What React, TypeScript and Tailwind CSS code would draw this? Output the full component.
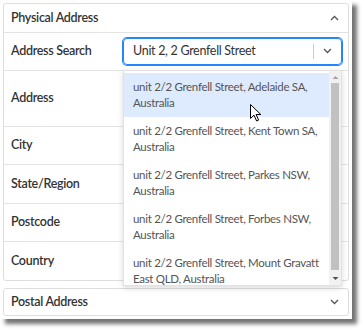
import React from "react";

const font = { fontFamily: 'Lato, "Noto Sans", sans-serif' };

const options = [
	"unit 2/2 Grenfell Street, Adelaide SA, Australia",
	"unit 2/2 Grenfell Street, Kent Town SA, Australia",
	"unit 2/2 Grenfell Street, Parkes NSW, Australia",
	"unit 2/2 Grenfell Street, Forbes NSW, Australia",
	"unit 2/2 Grenfell Street, Mount Gravatt East QLD, Australia",
];

const rows = [
	{ label: "Address", h: "h-[56px]" },
	{ label: "City", h: "h-[38px]" },
	{ label: "State/Region", h: "h-[39px]" },
	{ label: "Postcode", h: "h-[38px]" },
	{ label: "Country", h: "h-[38px]" },
];

const Chevron = ({ up, className }: { up?: boolean; className?: string }) => (
	<svg className={className} width="9" height="6" viewBox="0 0 9 6" fill="none">
		<path
			d={up ? "M1 5L4.5 1.5L8 5" : "M1 1L4.5 4.5L8 1"}
			stroke="currentColor"
			strokeWidth="1.3"
		/>
	</svg>
);

export default function App() {
	return (
		<div className="w-[364px] h-[332px] bg-white text-[12.5px] tracking-[-0.3px] text-[#333]" style={font}>
			<div className="relative w-[352px] h-[319px] bg-white p-[3px] shadow-[5px_5px_4px_rgba(0,0,0,0.55)]">
				<div className="border border-[#dedede] rounded-[3px] flex flex-col">
					<div className="h-[29px] flex items-center justify-between pl-[7px] pr-[9px] border-b border-[#e3e3e3] font-semibold">
						<span>Physical Address</span>
						<Chevron up className="text-[#555]" />
					</div>
					<div className="h-[38px] flex items-center border-b border-[#e3e3e3]">
						<span className="w-[119px] pl-[7px] font-semibold">Address Search</span>
						<div className="w-[219px] h-[27px] mb-px flex items-center border border-[#2684ff] rounded-[4px] shadow-[0_0_0_1px_#2684ff]">
							<span className="flex-1 pl-[9px] text-[#333]">Unit 2, 2 Grenfell Street</span>
							<span className="w-px h-[15px] bg-[#ccc]" />
							<Chevron className="mx-[9px] text-[#555]" />
						</div>
					</div>
					{rows.map((r, i) => (
						<div
							key={r.label}
							className={`${r.h} flex items-center ${i < rows.length - 1 ? "border-b border-[#e3e3e3]" : ""}`}
						>
							<span className="w-[119px] pl-[7px] font-semibold">{r.label}</span>
							<div className="w-[219px] h-[27px] border border-[#ddd] rounded-[4px]" />
						</div>
					))}
				</div>
				<div className="mt-[7px] h-[28px] border border-[#dedede] rounded-[3px] flex items-center justify-between pl-[7px] pr-[9px] font-semibold">
					<span>Postal Address</span>
					<Chevron className="text-[#555]" />
				</div>

				<div className="absolute left-[123px] top-[70px] w-[219px] h-[216px] bg-white border border-[#e2e2e2] shadow-[0_2px_6px_rgba(0,0,0,0.15)] flex overflow-hidden">
					<ul className="flex-1 pt-[2px] text-[11.5px] tracking-[-0.3px] text-[#555] leading-[16px]">
						{options.map((o, i) => (
							<li
								key={o}
								className={`h-[44px] pl-[9px] pr-[1px] py-[6px] ${i === 0 ? "bg-[#deebff]" : ""}`}
							>
								{o}
							</li>
						))}
					</ul>
					<div className="w-[12px] bg-[#f1f1f1] flex flex-col items-center">
						<svg width="7" height="12" viewBox="0 0 7 12" className="text-[#a3a3a3]">
							<path d="M0.5 8L3.5 5L6.5 8Z" fill="currentColor" />
						</svg>
						<div className="w-[8px] h-[187px] bg-[#c1c1c1]" />
						<svg width="7" height="12" viewBox="0 0 7 12" className="text-[#505050] mt-auto">
							<path d="M0.5 4L3.5 7L6.5 4Z" fill="currentColor" />
						</svg>
					</div>
				</div>

				<svg
					className="absolute left-[250px] top-[104px]"
					width="12"
					height="18"
					viewBox="0 0 12 18"
				>
					<path
						d="M0.5 0.5V14.5L4 11.2L6.6 17L8.6 16.1L6.1 10.5H10.8Z"
						fill="white"
						stroke="black"
						strokeWidth="1"
						strokeLinejoin="round"
					/>
				</svg>
			</div>
		</div>
	);
}
